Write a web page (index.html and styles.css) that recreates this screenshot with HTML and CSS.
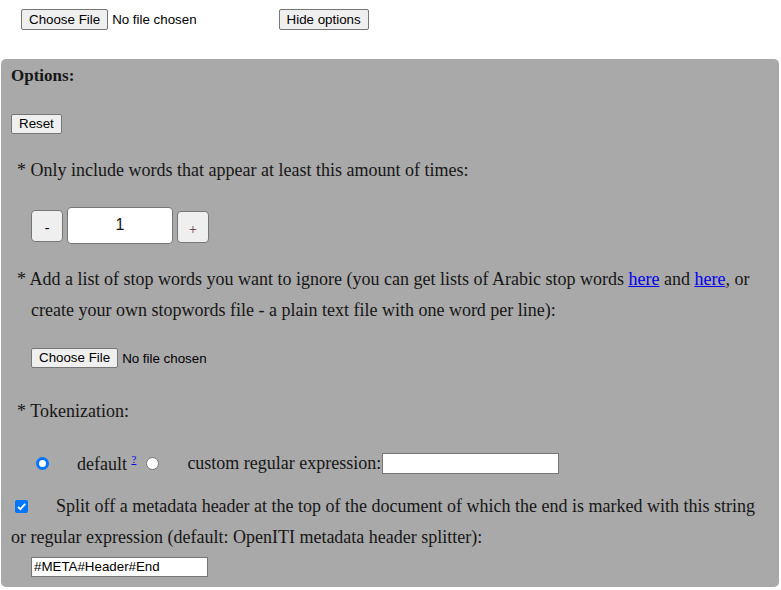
FILE: index.html
```html
<!DOCTYPE html>
<html>
<head>
<meta charset="utf-8">
<link rel="stylesheet" href="styles.css">
</head>
<body>
<div class="topbar">
  <div class="fileinput"><button class="btn">Choose File</button><span class="nofile">No file chosen</span></div>
  <button class="btn hide">Hide options</button>
</div>
<div class="panel">
  <div class="title">Options:</div>
  <button class="btn reset">Reset</button>
  <p class="item first">* Only include words that appear at least this amount of times:</p>
  <div class="counter">
    <button class="cbtn">-</button>
    <div class="num">1</div>
    <button class="cbtn plus">+</button>
  </div>
  <p class="item">* Add a list of stop words you want to ignore (you can get lists of Arabic stop words <a href="#">here</a> and <a href="#">here</a>, or create your own stopwords file - a plain text file with one word per line):</p>
  <div class="fileinput inner"><button class="btn">Choose File</button><span class="nofile">No file chosen</span></div>
  <p class="item tok">* Tokenization:</p>
  <div class="radios">
    <span class="radio on"></span>
    <span class="rlabel">default <sup><a href="#">?</a></sup></span>
    <span class="radio"></span>
    <span class="rlabel2">custom regular expression:</span>
    <span class="textbox wide"></span>
  </div>
  <p class="split"><span class="check"><svg width="13" height="13" viewBox="0 0 13 13"><rect x="0" y="0" width="13" height="13" rx="2" fill="#0075ff"/><path d="M3 6.8 L5.4 9.1 L10.2 3.9" fill="none" stroke="#fff" stroke-width="1.8"/></svg></span>Split off a metadata header at the top of the document of which the end is marked with this string or regular expression (default: OpenITI metadata header splitter):</p>
  <div class="textbox meta">#META#Header#End</div>
</div>
</body>
</html>
```
FILE: styles.css
```css
body {
  margin: 0;
  font-family: "Liberation Serif", serif;
  background: #fff;
}
.topbar {
  display: flex;
  align-items: flex-start;
  padding: 9px 0 0 21px;
  height: 50px;
  box-sizing: border-box;
}
.fileinput {
  display: flex;
  align-items: center;
  font-family: "Liberation Sans", sans-serif;
  font-size: 13.33px;
}
.btn {
  font-family: "Liberation Sans", sans-serif;
  font-size: 13.33px;
  color: #000;
  background: #efefef;
  border: 1px solid #767676;
  border-radius: 2px;
  padding: 1px 7px;
  height: 21px;
  line-height: 17px;
  margin: 0;
}
.nofile {
  margin-left: 4px;
  color: #000;
}
.hide {
  margin-left: 82px;
  width: 90px;
  padding: 1px 6px;
}
.panel {
  margin: 9px 2px 0 1px;
  background: #a9a9a9;
  border-radius: 5px;
  padding: 6px 10px 10px 10px;
  height: 528px;
  box-sizing: border-box;
  color: #161616;
  font-size: 18px;
}
.title {
  font-weight: bold;
  font-size: 17px;
  line-height: 20px;
  margin-top: 1px;
}
.reset {
  margin-top: 28px;
  height: 20px;
  line-height: 16px;
  display: block;
}
.item {
  margin: 0;
  padding-left: 20px;
  text-indent: -14px;
  line-height: 31px;
}
.first {
  margin-top: 21px;
}
.counter {
  display: flex;
  align-items: center;
  margin: 21px 0 20px 20px;
  gap: 4px;
}
.cbtn {
  width: 32px;
  height: 32px;
  background: #efefef;
  border: 1px solid #767676;
  border-radius: 4px;
  font-family: "Liberation Serif", serif;
  font-size: 14px;
  padding-top: 6px;
  color: #000;
}
.plus {
  color: #5a2a2a;
  margin-top: 3px;
}
.num {
  width: 106px;
  height: 37px;
  box-sizing: border-box;
  background: #fff;
  border: 1px solid #767676;
  border-radius: 4px;
  font-family: "Liberation Sans", sans-serif;
  font-size: 16px;
  display: flex;
  align-items: center;
  justify-content: center;
  padding-bottom: 2px;
}
.inner {
  margin: 22px 0 0 20px;
  height: 20px;
}
.inner .btn {
  height: 20px;
  line-height: 16px;
}
.tok {
  margin-top: 28px;
}
.radios {
  display: flex;
  align-items: center;
  margin: 21px 0 0 25px;
  height: 31px;
}
.radio {
  width: 13px;
  height: 13px;
  border-radius: 50%;
  background: #fff;
  box-sizing: border-box;
  border: 1px solid #767676;
}
.radio.on {
  border: 3px solid #0075ff;
  box-shadow: inset 0 0 0 1px #fff;
}
.rlabel {
  margin-left: 28px;
  margin-right: 10px;
}
.rlabel sup {
  font-size: 11px;
}
.rlabel2 {
  margin-left: 28px;
  margin-right: 1px;
}
a {
  color: #0000ee;
}
.textbox {
  display: block;
  background: #fff;
  border: 1px solid #767676;
  box-sizing: border-box;
}
.wide {
  width: 177px;
  height: 21px;
}
.split {
  margin: 12px 0 0 0;
  line-height: 31px;
}
.check {
  display: inline-block;
  width: 13px;
  height: 13px;
  margin: 0 28px 0 4px;
  vertical-align: -1px;
}
.check svg {
  display: block;
}
.meta {
  width: 177px;
  height: 20px;
  margin: 4px 0 0 20px;
  font-family: "Liberation Sans", sans-serif;
  font-size: 13.33px;
  line-height: 18px;
  padding-left: 2px;
  color: #000;
}
```
